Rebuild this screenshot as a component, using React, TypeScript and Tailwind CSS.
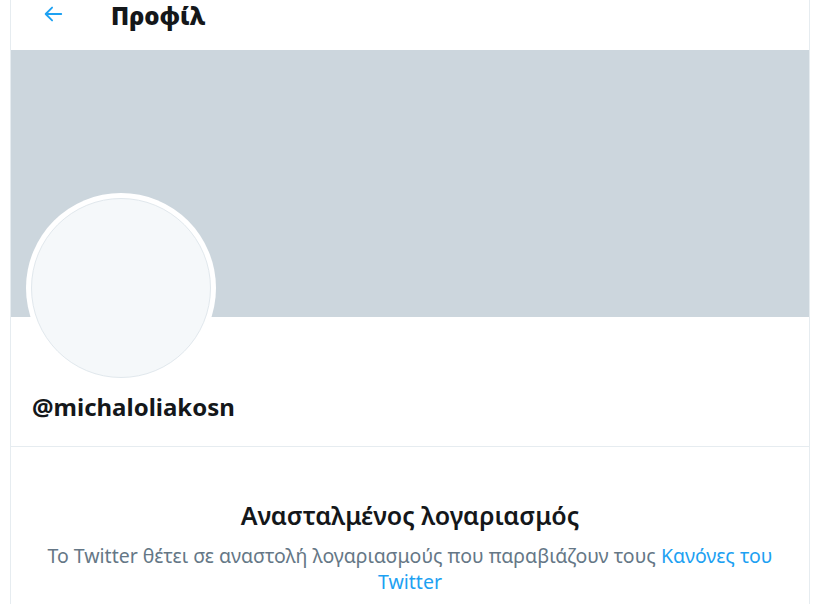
import React from "react";

export default function App() {
  return (
    <div
      className="w-[820px] h-[604px] overflow-hidden bg-white"
      style={{ fontFamily: '"Noto Sans", "Open Sans", Arial, sans-serif' }}
    >
      <div className="ml-[10px] w-[800px] min-h-[604px] border-x border-[#e6ecf0]">
        {/* header */}
        <div className="flex h-[50px] items-center">
          <div className="flex w-[100px] items-center pl-[31px] pb-[22px]">
            <svg width="22" height="22" viewBox="0 0 24 24" fill="none">
              <path
                d="M21 12H4M11 5l-7 7 7 7"
                stroke="#1da1f2"
                strokeWidth="2"
                strokeLinecap="round"
                strokeLinejoin="round"
              />
            </svg>
          </div>
          <h1 className="pb-[18px] text-[24px] font-black leading-none text-[#14171a]">Προφίλ</h1>
        </div>

        {/* banner */}
        <div className="h-[267px] bg-[#ccd6dd]" />

        {/* profile */}
        <div className="border-b border-[#e6ecf0] px-[21px] pb-[24px]">
          <div className="relative -mt-[124px] -ml-[6px] h-[190px] w-[190px] rounded-full bg-white p-[5px]">
            <div className="h-full w-full rounded-full border border-[#e1e8ed] bg-[#f5f8fa]" />
          </div>
          <div className="mt-[9px] text-[24px] font-bold leading-[30px] text-[#14171a]">@michaloliakosn</div>
        </div>

        {/* suspended */}
        <div className="px-[24px] pt-[53px] text-center">
          <h2 className="text-[25px] font-semibold leading-[30px] text-[#14171a]">Ανασταλμένος λογαριασμός</h2>
          <p className="mt-[13px] text-[19.5px] leading-[26px] text-[#657786]">
            Το Twitter θέτει σε αναστολή λογαριασμούς που παραβιάζουν τους{" "}
            <span className="text-[#1da1f2]">Κανόνες του Twitter</span>
          </p>
        </div>
      </div>
    </div>
  );
}
